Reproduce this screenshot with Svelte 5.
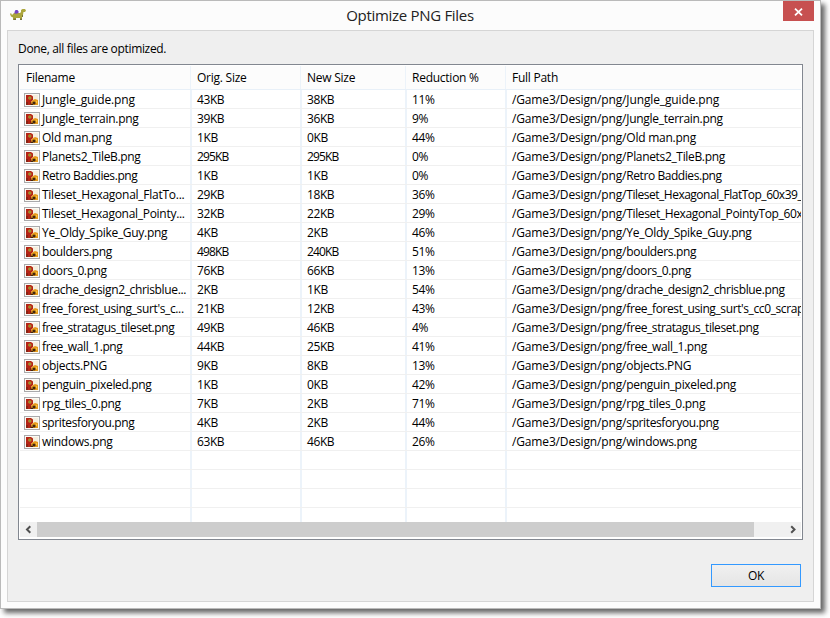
<script>
  const columns = ['Filename', 'Orig. Size', 'New Size', 'Reduction %', 'Full Path'];
  const dir = '/Game3/Design/png/';
  // name, original, new, reduction, tracking (px), full name when the column shortens it
  const files = [
    ['Jungle_guide.png', '43KB', '38KB', '11%', -0.12],
    ['Jungle_terrain.png', '39KB', '36KB', '9%', -0.29],
    ['Old man.png', '1KB', '0KB', '44%', -0.24],
    ['Planets2_TileB.png', '295KB', '295KB', '0%', -0.34],
    ['Retro Baddies.png', '1KB', '1KB', '0%', -0.43],
    ['Tileset_Hexagonal_FlatTo...', '29KB', '18KB', '36%', -0.26, 'Tileset_Hexagonal_FlatTop_60x39_', -0.49],
    ['Tileset_Hexagonal_Pointy...', '32KB', '22KB', '29%', -0.29, 'Tileset_Hexagonal_PointyTop_60x', -0.37],
    ['Ye_Oldy_Spike_Guy.png', '4KB', '2KB', '46%', -0.29],
    ['boulders.png', '498KB', '240KB', '51%', -0.35],
    ['doors_0.png', '76KB', '66KB', '13%', -0.38],
    ['drache_design2_chrisblue...', '2KB', '1KB', '54%', -0.35, 'drache_design2_chrisblue.png', -0.36],
    ["free_forest_using_surt's_c...", '21KB', '12KB', '43%', -0.36, "free_forest_using_surt's_cc0_scrap", -0.39],
    ['free_stratagus_tileset.png', '49KB', '46KB', '4%', -0.42],
    ['free_wall_1.png', '44KB', '25KB', '41%', -0.38],
    ['objects.PNG', '9KB', '8KB', '13%', -0.3],
    ['penguin_pixeled.png', '1KB', '0KB', '42%', -0.33],
    ['rpg_tiles_0.png', '7KB', '2KB', '71%', -0.3],
    ['spritesforyou.png', '4KB', '2KB', '44%', -0.38],
    ['windows.png', '63KB', '46KB', '26%', -0.28]
  ];
  const blanks = [0, 1, 2, 3];
</script>

<div class="desktop">
<div class="window">
  <header>
    <svg class="logo" width="18" height="14" viewBox="0 0 18 14">
      <path d="M1 6l1-1 1 2 2-2h6l1-1V2l1.500-1H16l1 1.500-1 1.500h-1.500L14 7l-1 2v3h-2v-2H7v2H4V9.500L2 8.500z" fill="#aca63c" />
      <path d="M4.500 10.500H7V12H4.500zM11 10.500h2V12h-2zM13 7h1v2h-1z" fill="#77733b" />
      <path d="M5.500 4l1-2h2l1 1.500V5l-2 .8-2-.3z" fill="#7442c4" />
    </svg>
    <h1>Optimize PNG Files</h1>
    <button class="close" aria-label="Close">
      <svg width="9" height="8" viewBox="0 0 9 8"><path d="M1 .7l7 6.600M8 .7L1 7.300" stroke="#fff" stroke-width="1.8" /></svg>
    </button>
  </header>
  <main>
    <p>Done, all files are optimized.</p>
    <div class="list">
      <div class="row head">
        {#each columns as c}<div class="cell"><span>{c}</span></div>{/each}
      </div>
      {#each files as f}
        <div class="row file">
          <div class="cell name">
            <svg width="16" height="14" viewBox="0 0 16 14">
              <path d="M0 0h16v14H0z" fill="#a9a9ab" /><path d="M1 1h14v12H1z" fill="#fbfaf4" />
              <path d="M2 2h12v10H2z" fill="#f6eedd" />
              <path d="M2 2h5l2 1.500V7L7 9v3H2z" fill="#b52416" />
              <path d="M2 9h2v3H2zM6 9h2v3H6z" fill="#8a2213" />
              <circle cx="5.800" cy="5" r="1.800" fill="#b9832a" /><path d="M5 4h1.500v2H5z" fill="#8f942f" />
              <path d="M7 9l2-2 2-1 3 1v5H8z" fill="#e79c1b" />
              <circle cx="10" cy="10" r="1.600" fill="#40260f" /><path d="M7 11h2v1H7z" fill="#40260f" /><path d="M12 8h1v2h-1z" fill="#f6c741" />
            </svg>
            <span style:letter-spacing="{f[4]}px">{f[0]}</span>
          </div>
          <div class="cell size" class:long={f[1].length > 4}><span>{f[1]}</span></div>
          <div class="cell size" class:long={f[2].length > 4}><span>{f[2]}</span></div>
          <div class="cell size"><span>{f[3]}</span></div>
          <div class="cell"><span>{dir}<span style:letter-spacing="{f[6] ?? f[4]}px">{f[5] ?? f[0]}</span></span></div>
        </div>
      {/each}
      {#each blanks as b}
        <div class="row">{#each columns as c}<div class="cell"></div>{/each}</div>
      {/each}
      <div class="scroll">
        <svg width="17" height="15" viewBox="0 0 17 15"><path d="M10.300 4.200L7 7.500l3.300 3.300" fill="none" stroke="#505050" stroke-width="2" /></svg>
        <div class="thumb"></div>
        <svg width="17" height="15" viewBox="0 0 17 15"><path d="M7.200 4.200l3.300 3.300-3.300 3.300" fill="none" stroke="#505050" stroke-width="2" /></svg>
      </div>
    </div>
    <button class="ok">OK</button>
  </main>
</div>
</div>

<style>
  :global(body) { background: #fff; }
  .desktop { height: 618px; overflow: hidden; }
  .window { box-sizing: border-box; width: 821px; height: 609px; padding: 0 6px 6px; border: 1px solid #bababa; background: #fcfcfc; box-shadow: 4px 4px 5px 0 rgba(0, 0, 0, .6); font: 12px "Open Sans", "Noto Sans", sans-serif; color: #000; display: flex; flex-direction: column; }
  header { height: 29px; display: flex; align-items: flex-start; justify-content: space-between; }
  .logo { margin: 7px 0 0 2px; width: 18px; }
  h1 { margin: 4px 0 0 10px; font-size: 15px; line-height: 20px; font-weight: 400; letter-spacing: -.3px; color: #222; }
  .close { width: 31px; height: 20px; padding: 1px 0 0; border: 0; background: #c75050; display: flex; align-items: center; justify-content: center; }
  main { flex: 1; border: 1px solid #d5d5d5; background: #efefef; padding: 9px 10px 0; display: flex; flex-direction: column; }
  p { margin: 0; height: 24px; line-height: 17px; letter-spacing: -.33px; }
  .list { box-sizing: border-box; width: 785px; height: 476px; border: 1px solid #828790; padding: 1px; background: #fff; display: flex; flex-direction: column; overflow: hidden; }
  .row { box-sizing: border-box; height: 19px; flex: none; display: grid; grid-template-columns: 172px 110px 105px 100px 294px; border-bottom: 1px solid #f0f0f0; }
  .row.head { height: 24px; background: #fcfcfc; border-color: #e8f0f8; }
  .row:nth-last-child(2) { height: 14px; border-bottom: 0; }
  .cell { box-sizing: border-box; border-right: 2px solid #ecf3fa; padding-left: 5px; line-height: 17px; white-space: pre; overflow: hidden; letter-spacing: -.15px; display: flex; align-items: center; }
  .head .cell { border-right-width: 1px; margin-right: 1px; letter-spacing: -.25px; }
  .head .cell:first-child { padding-left: 6px; }
  .file .cell { padding-top: 1px; align-items: flex-start; }
  .cell:last-child { border: 0; }
  .size { letter-spacing: -.4px; }
  .size.long { letter-spacing: -.85px; }
  .file .name { padding-left: 4px; gap: 2px; }
  .name svg { flex: none; margin-top: 2px; }
  .scroll { height: 15px; flex: none; background: #f0f0f0; display: flex; justify-content: space-between; }
  .thumb { width: 717px; margin-right: auto; background: #cdcdcd; }
  .ok { align-self: flex-end; width: 90px; height: 23px; margin: 24px 2px 0 0; padding: 0; border: 1px solid #3399ff; background: linear-gradient(#f0f0f0, #e5e5e5); font: inherit; letter-spacing: -.3px; color: #000; }
</style>
